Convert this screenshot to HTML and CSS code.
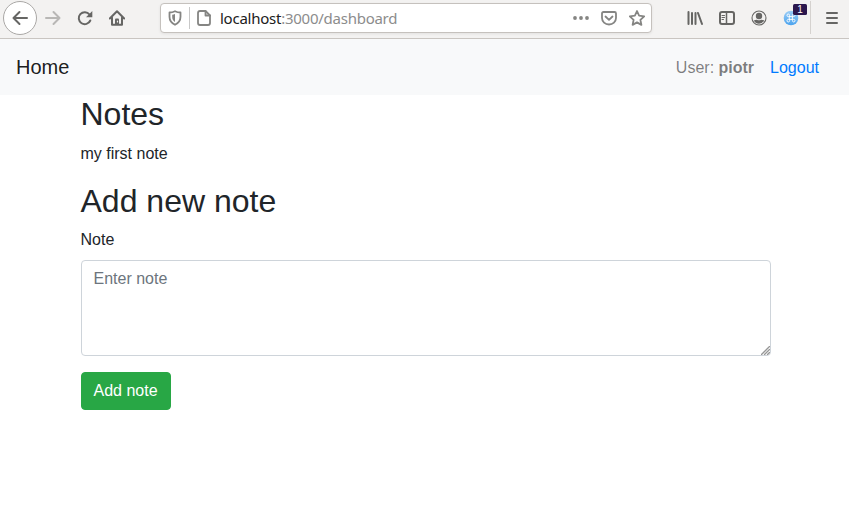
FILE: index.html
```html
<!DOCTYPE html>
<html lang="en">
<head>
<meta charset="utf-8">
<title>Dashboard</title>
<link rel="stylesheet" href="styles.css">
</head>
<body>
<div class="toolbar">
  <div class="tool back"><svg viewBox="0 0 16 16"><path d="M15 8H1.500M7.500 2L1.500 8l6 6"/></svg></div>
  <div class="tool disabled"><svg viewBox="0 0 16 16"><path d="M1 8h13.500M8.500 2l6 6-6 6"/></svg></div>
  <div class="tool"><svg viewBox="0 0 16 16"><path d="M12.500 4.500A6 6 0 1 0 13.300 10.500"/><path class="solid" d="M15.300 1v6.300H9z"/></svg></div>
  <div class="tool"><svg viewBox="0 0 16 16"><path d="M.8 8.500L8 1.300l7.200 7.200M3 7.500v7.300h10V7.500"/><path class="solid" d="M6 14V9.500q0-1 1-1h2q1 0 1 1V14z"/><path class="light" d="M8.500 11v1"/></svg></div>
  <div class="urlbar">
    <svg class="shield" viewBox="0 0 16 16"><path d="M8 1.200c2 1 3.700 1.300 5.500 1.300v4.300c0 4-2.100 6.400-5.500 8-3.400-1.600-5.500-4-5.500-8V2.500C4.300 2.500 6 2.200 8 1.200z"/><path class="solid" d="M8 4v8c-2-1.300-2.800-2.800-2.800-5V4.800C6.300 4.700 7 4.400 8 4z"/></svg>
    <span class="url-divider"></span>
    <svg class="page" viewBox="0 0 16 16"><path d="M4 1h5.500L14 5.500V13q0 2-2 2H4q-2 0-2-2V3q0-2 2-2z"/><path d="M9.500 1v4.500H14"/></svg>
    <span class="address"><b>localhost</b>:3000/dashboard</span>
    <div class="url-actions">
      <svg viewBox="0 0 16 16"><g class="solid"><circle cx="2" cy="8" r="1.900"/><circle cx="8" cy="8" r="1.900"/><circle cx="14" cy="8" r="1.900"/></g></svg>
      <svg viewBox="0 0 16 16"><path d="M2.500 2h11q1.500 0 1.500 1.500V8a7 6.500 0 0 1-14 0V3.500Q1 2 2.500 2z"/><path d="M4.500 6.500L8 9.800l3.500-3.300"/></svg>
      <svg viewBox="0 0 16 16"><path class="star" d="M8 1l2.100 4.700 5.100.6-3.800 3.500 1 5.100L8 12.400l-4.400 2.500 1-5.100L.8 6.300l5.100-.6z"/></svg>
    </div>
  </div>
  <div class="extensions">
    <div class="tool"><svg viewBox="0 0 16 16"><path d="M1.500 2v12M5 3v11M8.500 3v11M11 3l4 11"/></svg></div>
    <div class="tool"><svg viewBox="0 0 16 16"><rect class="frame" x="1" y="2" width="14" height="12" rx="2"/><path class="medium" d="M7.500 2v12"/><path class="thin" d="M3 5.500h2.500M3 7.500h2.500M3 9.500h1.500"/></svg></div>
    <div class="tool"><svg viewBox="0 0 16 16"><circle class="thin" cx="8" cy="8" r="7"/><circle class="solid" cx="8" cy="6" r="3.200"/><path class="solid" d="M2.800 10.500q2-1 3.200-.8 2 1.200 4 0 1.200-.2 3.200.8Q11.300 13.700 8 13.700t-5.200-3.200z"/></svg></div>
    <div class="tool addon"><svg viewBox="0 0 16 16"><defs><linearGradient id="sky" x2="0" y2="1"><stop stop-color="#9bcdf5"/><stop offset="1" stop-color="#4aa3ee"/></linearGradient></defs><circle class="globe" cx="8" cy="8" r="7.300"/><path class="command" d="M6.600 6.600h2.800v2.800H6.600zM6.600 6.600H5.300a1.300 1.300 0 1 1 1.300-1.300zM9.400 6.600V5.300a1.300 1.300 0 1 1 1.300 1.300zM9.400 9.400h1.300a1.300 1.300 0 1 1-1.300 1.300zM6.600 9.400v1.300a1.300 1.300 0 1 1-1.300-1.300z"/></svg><span class="badge">1</span></div>
  </div>
  <div class="tool menu"><svg viewBox="0 0 16 16"><path d="M3 3h10M3 8h10M3 13h10"/></svg></div>
</div>
<nav class="navbar">
  <a class="brand">Home</a>
  <span class="user">User: <strong>piotr</strong></span>
  <a class="logout">Logout</a>
</nav>
<main class="container">
  <h2>Notes</h2>
  <p>my first note</p>
  <h2 class="form-title">Add new note</h2>
  <form>
    <label for="note">Note</label>
    <div class="field">
      <textarea id="note" placeholder="Enter note"></textarea>
      <svg class="grip" viewBox="0 0 9 9"><path d="M.5 8.500l8-8M3.500 8.500l5-5M6.500 8.500l2-2"/></svg>
    </div>
    <button type="button">Add note</button>
  </form>
</main>
</body>
</html>
```
FILE: styles.css
```css
* { box-sizing: border-box; }
body {
  margin: 0;
  background: #fff;
  color: #212529;
  font: 16px/1.5 "Liberation Sans", Arial, sans-serif;
  overflow: hidden;
}
.toolbar {
  display: flex;
  align-items: center;
  height: 39px;
  padding: 0 1px 3px 3px;
  background: #f3f2f1;
  border-bottom: 1px solid #c9c5c1;
}
svg {
  display: block;
  width: 16px;
  height: 16px;
  flex: none;
  fill: none;
  stroke: #666664;
  stroke-width: 2;
  stroke-linejoin: round;
  stroke-linecap: round;
}
svg .solid { fill: #666664; stroke: none; }
svg .light { stroke: #f3f2f1; stroke-width: 1.2; }
svg .thin { stroke-width: 1.1; }
svg .medium { stroke-width: 1.5; }
.tool {
  display: flex;
  align-items: center;
  justify-content: center;
  flex: none;
  width: 32px;
  height: 32px;
}
.back {
  width: 34px;
  height: 34px;
  border: 1px solid #aaa8a6;
  border-radius: 50%;
  background: #fff;
}
.disabled svg { stroke: #b8b7b5; }
.urlbar {
  display: flex;
  align-items: center;
  width: 492px;
  height: 30px;
  margin-left: 27px;
  padding: 0 6px;
  border: 1px solid #c5c1bd;
  border-radius: 4px;
  background: #fff;
  box-shadow: 0 1px 3px rgba(0, 0, 0, .07);
}
.urlbar svg { stroke: #858583; stroke-width: 1.8; }
.urlbar svg .solid { fill: #858583; }
.url-divider { width: 1px; height: 22px; margin: 0 6px; background: #c8c8c8; }
.address {
  margin-left: 8px;
  color: #8c8c8c;
  font: 15px/20px "Noto Sans", sans-serif;
  letter-spacing: -.25px;
  white-space: nowrap;
}
.address b { color: #202020; font-weight: 400; }
.url-actions { display: flex; gap: 12px; margin-left: auto; }
.extensions {
  display: flex;
  align-items: center;
  height: 33px;
  margin-left: 27px;
  padding-right: 3px;
  border-right: 1px solid #d5d2cf;
}
.menu { margin-left: 5px; }
.addon { position: relative; }
.addon .globe { fill: url(#sky); stroke: none; }
.addon .command { stroke: #fff; stroke-width: .9; }
.badge {
  position: absolute;
  top: 2px;
  right: 0;
  width: 14px;
  height: 11px;
  border-radius: 1.5px;
  background: #2b174d;
  color: #fff;
  font-size: 10px;
  line-height: 11px;
  text-align: center;
}
.navbar {
  display: flex;
  align-items: center;
  height: 56px;
  padding: 0 30px 0 16px;
  background: #f8f9fa;
}
.brand { margin-right: auto; color: rgba(0, 0, 0, .9); font-size: 20px; line-height: 30px; }
.user { margin-right: 16px; padding-top: 1px; color: rgba(0, 0, 0, .5); }
.logout { padding-top: 1px; color: #007bff; }
strong { font-weight: 700; }
.container { width: 690px; margin-left: 80.5px; }
h2 { margin: 0 0 8px; font-size: 32px; font-weight: 500; line-height: 1.2; }
p { margin: 0 0 16px; padding-top: .7px; }
.form-title { margin-bottom: 7.3px; }
label { display: block; margin-bottom: 8px; }
.field { position: relative; margin-bottom: 16px; }
.grip {
  position: absolute;
  right: 1px;
  bottom: 1px;
  width: 9px;
  height: 9px;
  stroke: #969696;
  stroke-width: 1.3;
}
textarea {
  display: block;
  width: 100%;
  height: 96px;
  padding: 6px 12px;
  border: 1px solid #ced4da;
  border-radius: 4px;
  background: #fff;
  color: #495057;
  font: inherit;
  resize: none;
}
textarea::placeholder { color: #6c757d; opacity: 1; }
button {
  display: block;
  height: 38px;
  padding: 6px 12px;
  border: 1px solid #28a745;
  border-radius: 4px;
  background: #28a745;
  color: #fff;
  font: inherit;
}
```
